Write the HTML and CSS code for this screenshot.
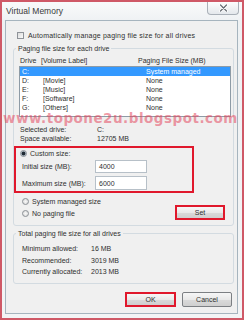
FILE: index.html
```html
<!DOCTYPE html>
<html lang="en">
<head>
    <meta charset="UTF-8">
    <title>Virtual Memory</title>
    <link rel="stylesheet" href="styles.css">
</head>
<body>
    <div class="window">
        <div class="titlebar">
            <span class="title">Virtual Memory</span>
            <span class="close">
                <svg width="9" height="8" viewBox="0 0 9 8">
                    <path d="M1.5 1 L7.5 7 M7.5 1 L1.5 7" stroke="#fff" stroke-width="3" stroke-linecap="round"/>
                    <path d="M1.5 1 L7.5 7 M7.5 1 L1.5 7" stroke="#6a6f76" stroke-width="1.3" stroke-linecap="round"/>
                </svg>
            </span>
        </div>

        <div class="client">
            <div class="check-row">
                <span class="checkbox"></span>
                <span>Automatically manage paging file size for all drives</span>
            </div>

            <fieldset class="group group-drives">
                <legend>Paging file size for each drive</legend>
                <div class="list-head">
                    <span class="col-drive">Drive</span>
                    <span class="col-label">[Volume Label]</span>
                    <span>Paging File Size (MB)</span>
                </div>
                <div class="drive-list">
                    <div class="drive-row selected"><span class="col-drive">C:</span><span class="col-name"></span><span>System managed</span></div>
                    <div class="drive-row"><span class="col-drive">D:</span><span class="col-name">[Movie]</span><span>None</span></div>
                    <div class="drive-row"><span class="col-drive">E:</span><span class="col-name">[Music]</span><span>None</span></div>
                    <div class="drive-row"><span class="col-drive">F:</span><span class="col-name">[Software]</span><span>None</span></div>
                    <div class="drive-row"><span class="col-drive">G:</span><span class="col-name">[Others]</span><span>None</span></div>
                </div>

                <div class="info first">
                    <span class="info-label">Selected drive:</span><span>C:</span>
                </div>
                <div class="info">
                    <span class="info-label">Space available:</span><span>12705 MB</span>
                </div>

                <div class="custom-box">
                    <div class="radio-row">
                        <span class="radio checked"></span>
                        <span>Custom size:</span>
                    </div>
                    <div class="size-row">
                        <span class="size-label">Initial size (MB):</span>
                        <span class="size-input">4000</span>
                    </div>
                    <div class="size-row tall">
                        <span class="size-label">Maximum size (MB):</span>
                        <span class="size-input">6000</span>
                    </div>
                </div>

                <div class="options">
                    <div class="option-list">
                        <div class="radio-row">
                            <span class="radio"></span>
                            <span>System managed size</span>
                        </div>
                        <div class="radio-row">
                            <span class="radio"></span>
                            <span>No paging file</span>
                        </div>
                    </div>
                    <span class="btn btn-set marked">Set</span>
                </div>
            </fieldset>

            <fieldset class="group group-total">
                <legend>Total paging file size for all drives</legend>
                <div class="total-row"><span class="total-label">Minimum allowed:</span><span>16 MB</span></div>
                <div class="total-row"><span class="total-label">Recommended:</span><span>3019 MB</span></div>
                <div class="total-row"><span class="total-label">Currently allocated:</span><span>2013 MB</span></div>
            </fieldset>

            <div class="buttons">
                <span class="btn btn-ok marked">OK</span>
                <span class="btn btn-cancel">Cancel</span>
            </div>
        </div>

        <div class="watermark">www.topone2u.blogspot.com</div>
    </div>
</body>
</html>
```

FILE: styles.css
```css
* {
    box-sizing: border-box;
}

body {
    margin: 0;
    background: #fff;
    font-family: "Liberation Sans", Arial, sans-serif;
    font-size: 7px;
    color: #2f2f2f;
}

.window {
    position: relative;
    width: 244px;
    height: 320px;
    border: 2px solid #cf5967;
    background: linear-gradient(#f9fafb, #eef1f3 20px, #f3f4f5);
    display: flex;
    flex-direction: column;
}

/* Title bar */
.titlebar {
    height: 18px;
    flex: none;
    display: flex;
    justify-content: space-between;
    align-items: flex-start;
}

.title {
    font-size: 8.5px;
    line-height: 18px;
    padding-left: 4px;
    color: #3a3a3a;
}

.close {
    width: 32px;
    height: 13px;
    margin-right: 3px;
    border: 1px solid #a9b0b8;
    border-top: none;
    border-radius: 0 0 4px 4px;
    background: linear-gradient(#fdfdfd, #e4e8ec);
    display: flex;
    align-items: center;
    justify-content: center;
}

/* Client area */
.client {
    flex: 1;
    margin: 0 4px 4px 3px;
    border: 1px solid #a6b4be;
    background: #f0f0f0;
    padding: 0 3px 0 7px;
}

.check-row {
    margin-top: 9px;
    height: 10px;
    padding-left: 4px;
    display: flex;
    align-items: center;
    gap: 4px;
    letter-spacing: 0.2px;
}

.checkbox {
    width: 7px;
    height: 7px;
    border: 1px solid #8f9399;
    background: linear-gradient(135deg, #dcdcdc, #fafafa);
}

/* Group boxes */
.group {
    margin: 4px 0 0;
    border: 1px solid #d3dbe1;
    border-radius: 3px;
    min-inline-size: 0;
}

.group legend {
    padding: 0 2px;
    margin-left: -4px;
    line-height: 9px;
}

.group-drives {
    padding: 3px 2px 5px 6px;
}

.group-total {
    margin-top: 3px;
    padding: 5px 2px 5px 6px;
}

.list-head {
    display: flex;
    line-height: 9px;
}

.list-head .col-drive {
    width: 21px;
}

.list-head .col-label {
    width: 97px;
}

.drive-list {
    margin: 1px 0 0 -1px;
    border: 1px solid #8e9ba6;
    background: #fff;
    padding-bottom: 4px;
}

.drive-row {
    display: flex;
    height: 9px;
    line-height: 9px;
    padding-left: 2px;
}

.drive-row .col-drive {
    width: 21px;
}

.drive-row .col-name {
    width: 103px;
}

.drive-row.selected {
    background: #3399ff;
    color: #fff;
}

.info {
    display: flex;
    line-height: 9px;
}

.info.first {
    margin-top: 7.5px;
}

.info-label {
    width: 77px;
}

/* Custom size box */
.custom-box {
    margin: 3.5px 0 0 -6px;
    width: 180px;
    border: 2px solid #e0182c;
    padding: 0 0 1px 4px;
}

.radio-row {
    height: 10px;
    display: flex;
    align-items: center;
    gap: 3px;
}

.radio {
    width: 7px;
    height: 7px;
    border: 1px solid #8b9096;
    border-radius: 50%;
    background: radial-gradient(#f8f8f8, #d6d6d6);
}

.radio.checked {
    background: radial-gradient(#1f2a33 0 1.6px, #a9b6c0 2.2px, #e8ecef);
}

.size-row {
    margin: 2px 0 0 2px;
    height: 13px;
    display: flex;
    align-items: center;
}

.size-row.tall {
    margin-top: 3px;
    height: 14px;
}

.size-label {
    width: 73px;
}

.size-input {
    width: 52px;
    height: 100%;
    border: 1px solid #b7c0c8;
    background: #fff;
    padding-left: 3px;
    display: flex;
    align-items: center;
}

.options {
    margin-top: 3px;
    display: flex;
    justify-content: space-between;
}

.option-list {
    display: flex;
    flex-direction: column;
    gap: 2px;
    padding-left: 2px;
}

/* Buttons */
.btn {
    height: 15px;
    border: 1px solid #7c7f83;
    border-radius: 2px;
    background: linear-gradient(#f6f6f6, #e9e9e9 50%, #dadada 51%, #cfcfcf);
    display: flex;
    align-items: center;
    justify-content: center;
}

.btn.marked {
    border: 2px solid #e0182c;
    border-radius: 0;
}

.btn-set {
    width: 50px;
    margin: 9px 6px 0 0;
}

.total-row {
    display: flex;
    height: 11.5px;
    align-items: center;
    padding-left: 2px;
}

.total-label {
    width: 69px;
}

.buttons {
    margin-top: 8.5px;
    padding-right: 2px;
    display: flex;
    justify-content: flex-end;
    gap: 6px;
}

.btn-ok {
    width: 51px;
}

.btn-cancel {
    width: 50px;
}

/* Watermark over the dialog */
.watermark {
    position: absolute;
    left: 1px;
    top: 109px;
    font-family: "DejaVu Sans", sans-serif;
    font-weight: bold;
    font-size: 13.5px;
    letter-spacing: 0.5px;
    line-height: 14px;
    color: rgba(228, 70, 92, 0.55);
    white-space: nowrap;
}
```
